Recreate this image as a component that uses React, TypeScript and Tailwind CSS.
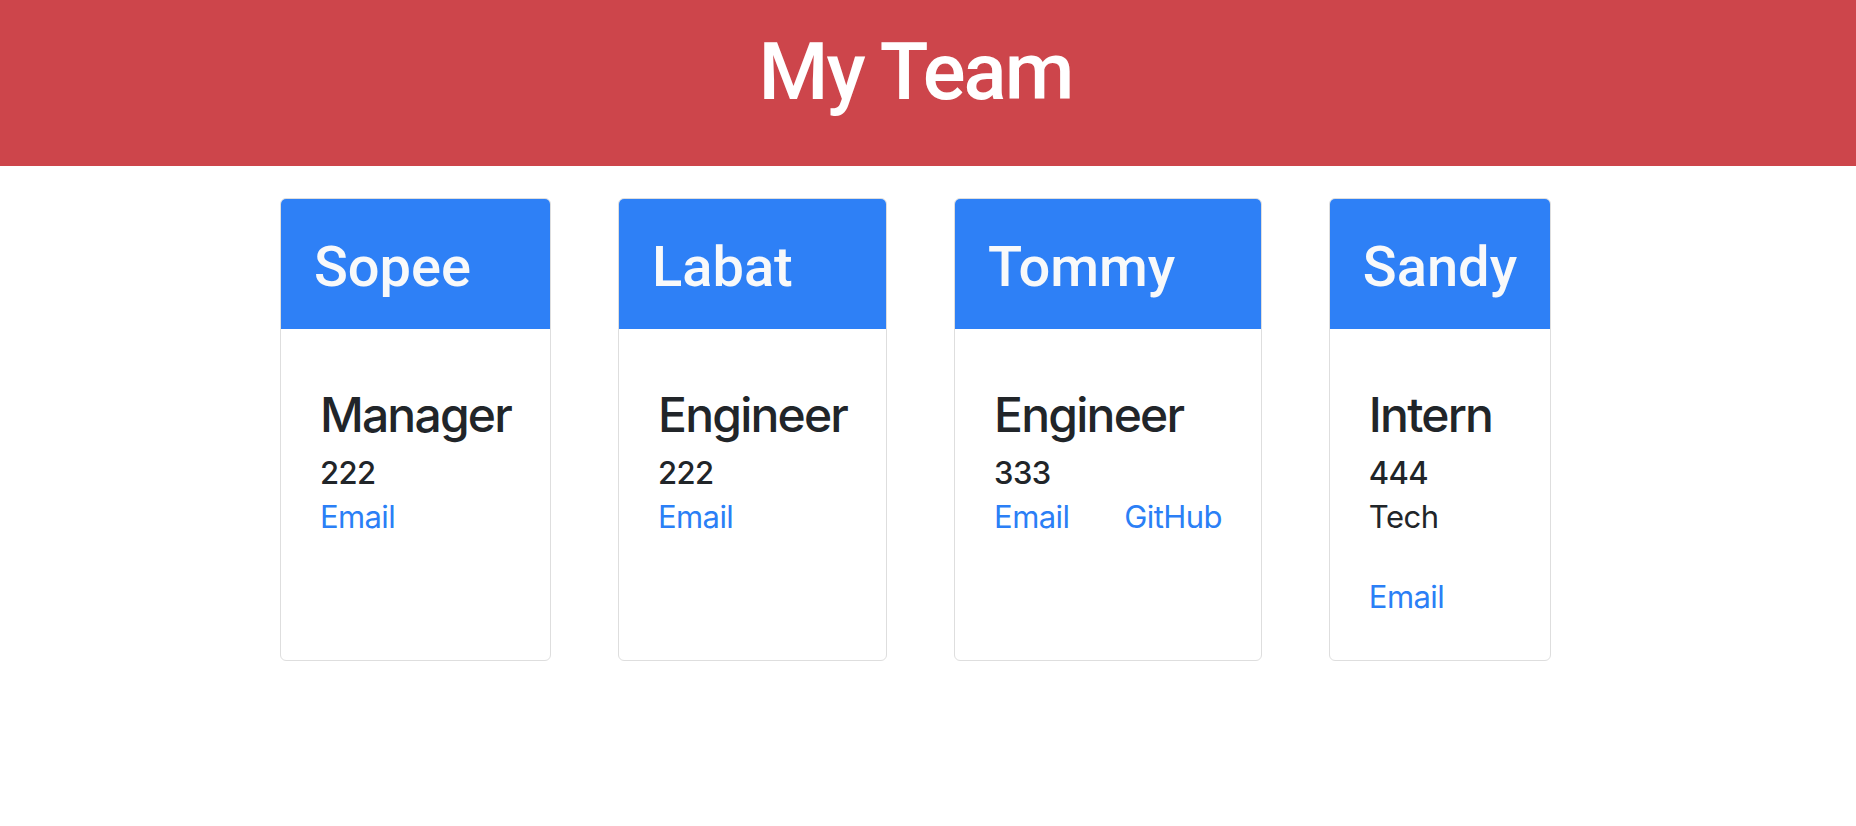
const team = [
  { name: 'Sopee', role: 'Manager', id: '222', links: ['Email'] },
  { name: 'Labat', role: 'Engineer', id: '222', links: ['Email'] },
  { name: 'Tommy', role: 'Engineer', id: '333', links: ['Email', 'GitHub'] },
  { name: 'Sandy', role: 'Intern', id: '444', school: 'Tech', links: ['Email'] },
];

function MemberCard({ member }: { member: (typeof team)[number] }) {
  return (
    <div className="flex flex-col border border-[#dedede] rounded-[6px] bg-white overflow-hidden">
      <div className="bg-[#2e80f6] px-[33px] pt-[35px] pb-[29px]">
        <h2 className="text-[56px] leading-[66px] font-medium text-[#f8f9fa] font-['Roboto',Arial,sans-serif]">
          {member.name}
        </h2>
      </div>
      <div className="flex-1 px-[39px] pt-[57px] pb-[41px] text-[#212529]">
        <h4 className="text-[48px] leading-[58px] font-medium mb-[7px] tracking-[-1.8px]">{member.role}</h4>
        <p className="text-[31px] leading-[44px] font-medium tracking-[-0.6px]">{member.id}</p>
        {member.school ? (
          <>
            <p className="text-[31px] leading-[44px] mb-[36px] tracking-[-0.5px]">{member.school}</p>
            <a className="block text-[31px] leading-[44px] tracking-[-0.6px] text-[#2b7ff6]">Email</a>
          </>
        ) : (
          <div className="flex gap-[55px]">
            {member.links.map((l) => (
              <a key={l} className="text-[31px] leading-[44px] tracking-[-0.6px] text-[#2b7ff6]">
                {l}
              </a>
            ))}
          </div>
        )}
      </div>
    </div>
  );
}

export default function App() {
  return (
    <div className="min-h-screen bg-white font-['Inter',sans-serif]">
      <header className="bg-[#cd454b] pt-[25px] pb-[47px] pr-[25px] text-center">
        <h1 className="text-[80px] leading-[94px] font-medium tracking-[-2px] text-white font-['Roboto',sans-serif]">
          My Team
        </h1>
      </header>
      <main className="flex justify-center items-stretch gap-[67px] pr-[25px] mt-[32px]">
        {team.map((m) => (
          <MemberCard key={m.name} member={m} />
        ))}
      </main>
    </div>
  );
}
